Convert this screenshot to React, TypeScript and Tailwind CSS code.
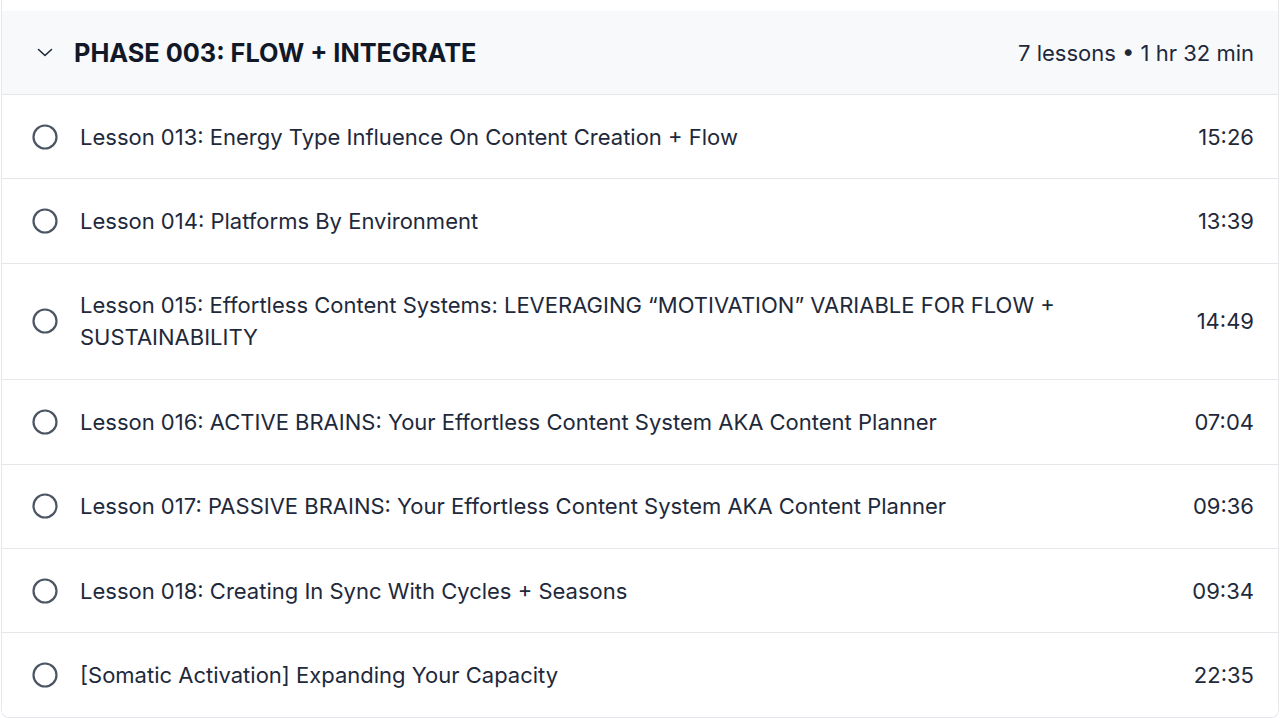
import React from "react";

const lessons: { title: string; time: string }[] = [
  { title: "Lesson 013: Energy Type Influence On Content Creation + Flow", time: "15:26" },
  { title: "Lesson 014: Platforms By Environment", time: "13:39" },
  {
    title:
      "Lesson 015: Effortless Content Systems: LEVERAGING \u201CMOTIVATION\u201D VARIABLE FOR FLOW + SUSTAINABILITY",
    time: "14:49",
  },
  { title: "Lesson 016: ACTIVE BRAINS: Your Effortless Content System AKA Content Planner", time: "07:04" },
  { title: "Lesson 017: PASSIVE BRAINS: Your Effortless Content System AKA Content Planner", time: "09:36" },
  { title: "Lesson 018: Creating In Sync With Cycles + Seasons", time: "09:34" },
  { title: "[Somatic Activation] Expanding Your Capacity", time: "22:35" },
];

export default function App() {
  return (
    <div
      className="min-h-[718px] w-full bg-white px-px"
      style={{ fontFamily: "Inter, 'Noto Sans', sans-serif" }}
    >
      <div className="border-x border-b border-[#e5e7eb] rounded-b-lg overflow-hidden">
        <div className="h-[11px] bg-white" />
        <div className="flex items-center justify-between bg-[#f8f9fb] border-b border-[#e5e7eb] pl-[31px] pr-6 py-[25.5px]">
          <div className="flex items-center">
            <div className="flex w-6 h-8 items-center justify-center">
              <svg width="16" height="9" viewBox="0 0 16 9" fill="none">
                <path d="M1.5 1.5 L8 7.5 L14.5 1.5" stroke="#1f2937" strokeWidth="1.6" strokeLinecap="round" strokeLinejoin="round" />
              </svg>
            </div>
            <h2 className="ml-[17px] text-[25.3px] leading-8 font-bold text-[#111827]">
              PHASE 003: FLOW + INTEGRATE
            </h2>
          </div>
          <div className="text-[22px] leading-8 text-[#1e293b]">7 lessons • 1 hr 32 min</div>
        </div>
        {lessons.map((l, i) => (
          <div
            key={i}
            className={`flex items-center gap-12 pl-[30px] pr-6 py-[25.7px] bg-white ${
              i < lessons.length - 1 ? "border-b border-[#e5e7eb]" : ""
            }`}
          >
            <div className="flex flex-1 items-center gap-[22px]">
              <svg width="26" height="26" viewBox="0 0 26 26" fill="none" className="shrink-0">
                <circle cx="13" cy="13" r="11.5" stroke="#4b5563" strokeWidth="2.2" />
              </svg>
              <span className="text-[22px] leading-8 text-[#1e293b]">{l.title}</span>
            </div>
            <span className="text-[22px] leading-8 text-[#1e293b] shrink-0">{l.time}</span>
          </div>
        ))}
      </div>
    </div>
  );
}
